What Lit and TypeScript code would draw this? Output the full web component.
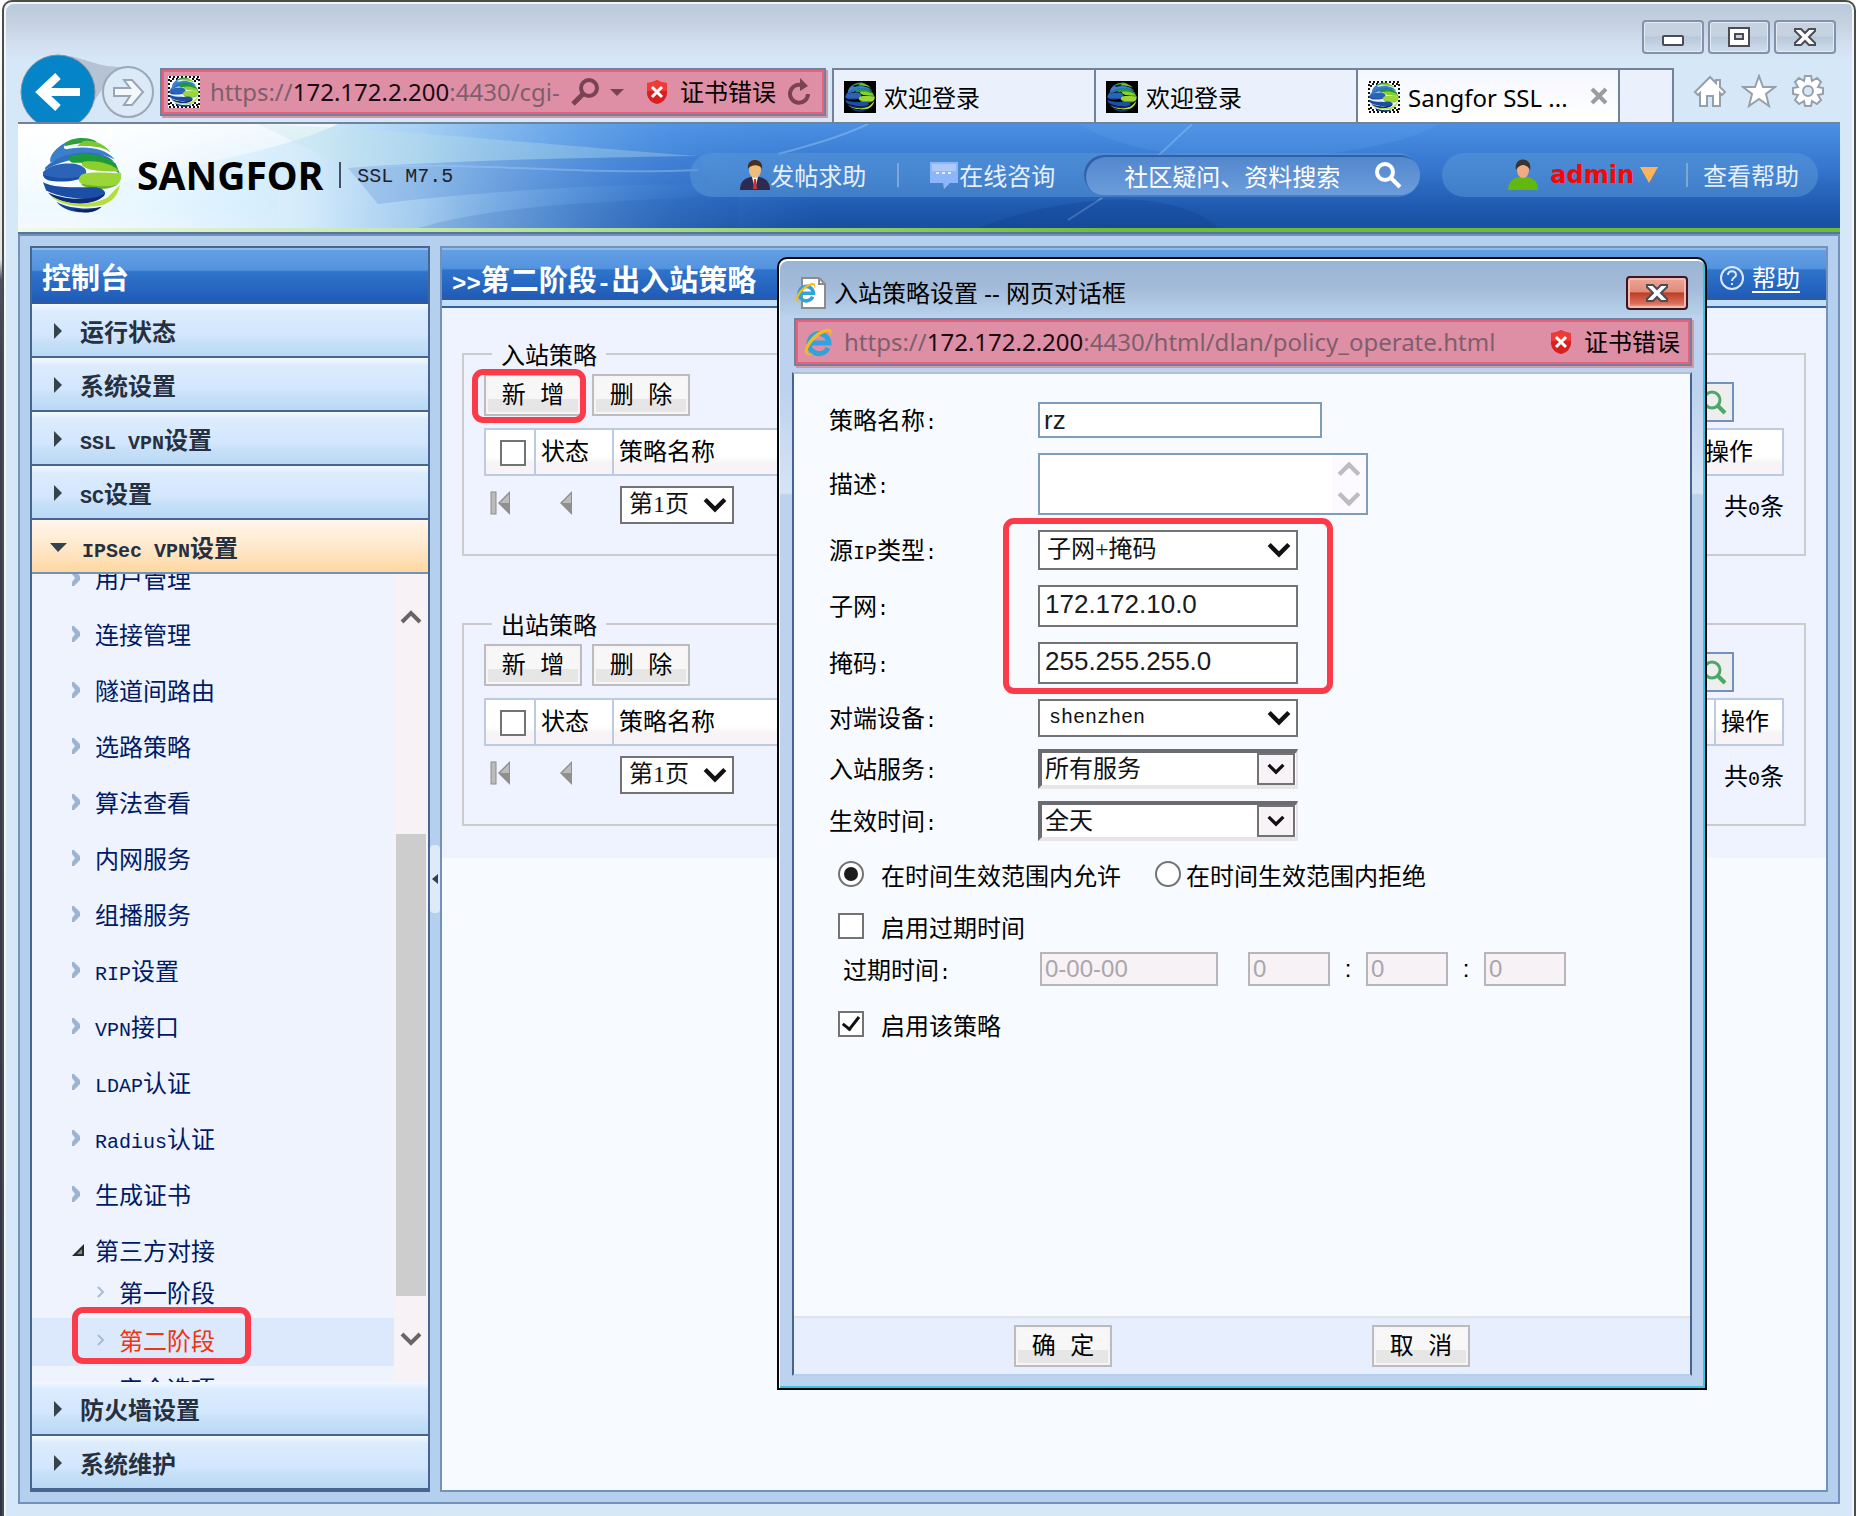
import { LitElement, html, css, svg, nothing } from "lit";
import { customElement } from "lit/decorators.js";
import { classMap } from "lit/directives/class-map.js";

/* Latin runs use a half-em monospace so that they align with the CJK grid. */
const mix = (text: string) =>
  text
    .split(/([\x20-\x7e]+)/)
    .filter((part) => part)
    .map((part) => (/^[\x20-\x7e]+$/.test(part) ? html`<span class="lat">${part}</span>` : part));

const globeBands = svg`
  <path fill="#2f9e3c" d="M22 6C30 0 46 -1 54 5C44 5 32 6 22 9Z"/>
  <path fill="#7cc832" d="M40 4C52 2 62 8 67 15C60 10 50 8 34 9Z"/>
  <path fill="#3b7fcb" d="M8 21C10 14 17 8 24 5C21 9 20 11 24 12C40 8 62 10 71 22C56 13 30 14 8 25Z"/>
  <path fill="#2f6fc0" d="M3 30C12 20 28 15 44 15C56 15 66 19 70 24C54 17 24 20 3 32Z"/>
  <path fill="#1d9a3a" d="M28 18C46 14 64 18 72 26L76 36C66 27 50 25 30 25C26 24 25 20 28 18Z"/>
  <path fill="#8ccf2c" d="M40 24C56 22 70 27 75 33C72 34 60 34 48 32C42 30 36 27 40 24Z"/>
  <path fill="#2a63b8" d="M1 34C8 27 20 25 32 26C42 28 45 33 42 37C36 43 14 42 1 38Z"/>
  <path fill="#1c4fa3" d="M1 37C14 41 32 41 42 37C38 43 22 44 12 43C6 43 2 41 1 37Z"/>
  <path fill="#9ad638" d="M40 36C52 33 68 36 77 35C78 40 76 44 74 46C62 50 48 48 38 45C34 42 36 38 40 36Z"/>
  <path fill="#6db528" d="M38 45C50 48 64 49 74 46C70 50 56 52 48 50C43 49 39 48 38 45Z"/>
  <path fill="#1d4ea6" d="M1 44C12 50 34 49 52 49C60 50 64 54 60 58C52 63 20 60 4 52Z"/>
  <path fill="#0d2c74" d="M6 54C22 62 52 62 61 55C60 60 50 65 36 65C22 64 10 60 6 54Z"/>
  <path fill="#b7dd3c" d="M8 57C22 66 44 68 62 60C66 58 68 54 76 47C74 56 70 62 60 66C44 70 18 68 8 57Z"/>
  <path fill="#173f98" d="M14 63C26 70 46 71 58 68C50 75 26 77 14 63Z"/>
  <path fill="#0a2264" d="M30 70C40 72 50 71 58 68C52 74 40 76 30 70Z"/>`;

const globe = (cls: string) => html`<svg class=${cls} viewBox="0 0 78 74" aria-hidden="true">${globeBands}</svg>`;

const favicon = (dark: boolean) => html`<svg class="fav" viewBox="0 0 32 32" aria-hidden="true">
  ${dark
    ? svg`<rect width="32" height="32" fill="#000"/>`
    : svg`<rect width="32" height="32" fill="#fff"/><rect x="1" y="1" width="30" height="30" fill="none" stroke="#111" stroke-width="2" stroke-dasharray="2 2"/>
      <path d="M2 3h8M22 3h8M2 29h8M22 29h8" stroke="#111" stroke-width="2" stroke-dasharray="2 2" stroke-dashoffset="2"/>
      <path d="M2 5h4M26 5h4M2 27h4M26 27h4" stroke="#111" stroke-width="2" stroke-dasharray="2 2"/><ellipse cx="16" cy="16" rx="14" ry="14" fill="#e6f4fb"/>`}
  <svg x="1" y="1" width="30" height="30" viewBox="0 0 78 74" preserveAspectRatio="none">${globeBands}</svg>
</svg>`;

const shield = html`<svg class="shield" viewBox="0 0 22 26" aria-hidden="true">
  <path d="M11 1C14 3 18 4 21 4V14C21 20 16 24 11 25C6 24 1 20 1 14V4C4 4 8 3 11 1Z" fill="#d91f1f"/>
  <path d="M11 1C14 3 18 4 21 4V12H1V4C4 4 8 3 11 1Z" fill="#ee3b35"/>
  <path d="M6 8L16 18M16 8L6 18" stroke="#fff" stroke-width="3"/></svg>`;

const ieMark = svg`<path d="M26 22A10 10 0 1 1 27 17H9" fill="none" stroke="#2ea3dc" stroke-width="5"/>
  <path d="M4 28C-1 24 10 6 24 3C30 2 31 6 28 10C29 5 26 5 22 7C13 11 4 22 6 27C7 29 10 28 12 27C9 30 6 30 4 28Z" fill="#f3bb1c"/>`;

const ieIcon = html`<svg class="fav" viewBox="0 0 32 32" aria-hidden="true">${ieMark}</svg>`;

const pageIcon = html`<svg class="fav" viewBox="0 0 32 32" aria-hidden="true">
  <path d="M8 1H25L31 7V31H8Z" fill="#fff" stroke="#8c8c8c" stroke-width="2"/><path d="M25 1V7H31" fill="none" stroke="#8c8c8c" stroke-width="2"/>
  <svg x="0" y="4" width="23" height="23" viewBox="0 0 32 32">${ieMark}</svg></svg>`;

const chevron = (cls: string, up = false) => html`<svg class=${cls} viewBox="0 0 22 18" aria-hidden="true">
  <path d=${up ? "M2 14L11 5L20 14" : "M2 4L11 13L20 4"} fill="none" stroke="currentColor" stroke-width="4"/></svg>`;

const crossGlyph = html`<svg class="glyph" viewBox="0 0 24 20" aria-hidden="true">
  <path d="M2 2H8L12 6L16 2H22V4L16 10L22 16V18H16L12 14L8 18H2V16L8 10L2 4Z" fill="#fff" stroke="#4a4c58" stroke-width="2"/></svg>`;

const sections = ["运行状态", "系统设置", "SSL VPN设置", "SC设置"];
const leaves = ["用户管理", "连接管理", "隧道间路由", "选路策略", "算法查看", "内网服务", "组播服务", "RIP设置", "VPN接口", "LDAP认证", "Radius认证", "生成证书"];
const tail = ["防火墙设置", "系统维护"];

@customElement("app-root")
export class AppRoot extends LitElement {
  static styles = css`
    :host { display: block; font: 24px/32px "Noto Sans CJK SC", sans-serif; color: #000; }
    *, *::before, *::after { box-sizing: border-box; }
    button, input, select, textarea { font: inherit; color: inherit; margin: 0; border-radius: 0; }
    button { padding: 0; border: 0; background: none; cursor: pointer; white-space: pre; }
    a { color: inherit; text-decoration: none; }
    svg { display: block; flex: none; }
    .lat { font-family: "Liberation Mono", monospace; font-size: 20px; line-height: 20px; white-space: pre; }
    .fav { width: 32px; height: 32px; }
    .shield { width: 22px; height: 26px; }
    .cap { font-family: "Noto Sans", "Noto Sans CJK SC", sans-serif; white-space: nowrap; }

    .desk { background: linear-gradient(#fff 0, #e4e4e4 260px, #4a5266 280px, #3b4150 360px, #2c3448); padding-left: 2px; }
    .window { position: relative; display: flex; flex-direction: column; height: 100vh; min-height: 1100px; padding: 0 14px 12px;
      border: 2px solid #4a4e48; border-bottom: 0; border-radius: 10px 10px 0 0; box-shadow: inset 2px 2px 0 #f2f6fa, inset -2px 0 0 #f2f6fa;
      background: linear-gradient(#b9cadb 0, #c4d0de 20px, #d3e0f1 44px, #d6e7f7 58px); }

    .caption { display: flex; justify-content: flex-end; gap: 4px; height: 52px; padding: 18px 4px 0 0; }
    .caption button { width: 62px; height: 34px; display: grid; place-items: center; border: 2px solid #8391ae; border-radius: 4px;
      background: linear-gradient(#c6d2e0 45%, #b8c8da 50%, #d0deed); box-shadow: inset 0 0 0 1px #e2eaf3; }
    .glyph { width: 24px; height: 20px; }

    .nav { display: flex; align-items: flex-start; height: 68px; padding-left: 2px; }
    .back { width: 76px; height: 68px; }
    .back svg, .fwd svg { overflow: visible; }
    .back svg { clip-path: inset(-4px -60px 0 -4px); }
    .fwd { width: 54px; height: 54px; margin: 11px 5px 0 5px; position: relative; }
    .addr { display: flex; align-items: center; height: 48px; border: 2px solid #71839c; background: #df8fa5;
      box-shadow: inset 0 0 0 2px #e5627a, 2px 2px 0 #d596a8; padding: 0 12px 0 6px; color: #000; }
    .nav .addr { flex: 644 1 0; margin-top: 14px; min-width: 0; }
    .url { color: #7d5f6c; margin-left: 10px; }
    .url b { font-weight: 400; color: #1a0a10; }
    .nav .url { flex: 1; overflow: hidden; }
    .addr .shield { margin: 0 12px 0 20px; }
    .addr .reload { margin-left: 12px; }
    .tabs { flex: 838 1 0; display: flex; height: 54px; margin: 14px 0 0 6px; border: 2px solid #71839c; border-bottom: 0; background: #eaf1fd; min-width: 0; }
    .tab { flex: 1; display: flex; align-items: center; gap: 8px; padding: 0 10px; border-right: 2px solid #71839c; min-width: 0; text-align: left; }
    .tab.on { background: linear-gradient(#f5f7ff, #fff); }
    .tab .x { margin-left: auto; }
    .tab .fav { margin-top: 2px; }
    .tab .cap { margin-top: 4px; }
    .stub { width: 52px; }
    .tools { width: 166px; display: flex; justify-content: flex-end; gap: 14px; padding: 20px 15px 0 0; }

    .banner { position: relative; display: flex; align-items: center; height: 112px; flex: none; border-top: 2px solid #71839c; border-bottom: 2px solid #55759f;
      background: linear-gradient(90deg, #eefbe6, #aadb8c 34%, #6dbd35 60%) bottom / 100% 4px no-repeat, #2c68bd; padding: 0 22px 6px 24px; }
    .sky { position: absolute; z-index: 0; left: 0; top: 0; width: 100%; height: 104px; }
    .banner > :not(.sky) { position: relative; }
    .logo { width: 80px; height: 76px; }
    .brand { font: 700 39px/44px "Noto Sans", sans-serif; margin-left: 15px; }
    .rule { width: 2px; height: 26px; background: #46505e; margin: 0 16px; }
    .model { margin-right: auto; color: #1c1f2a; font-family: "Liberation Mono", monospace; font-size: 20px; padding-top: 4px; }
    .pill { display: flex; align-items: center; height: 44px; border-radius: 22px; background: #5b9ad880; color: #e6effa; white-space: nowrap; }
    .help-pill { padding-left: 50px; }
    .pill a { display: flex; align-items: center; }
    .pill .bar { width: 2px; height: 24px; background: #7fa7d6; }
    .bar.mid { margin: 0 31px; }
    .bar.end { margin-right: 15px; }
    .user-pill { margin-left: 22px; padding: 0 19px 0 66px; }
    .drop { margin: 0 28px 0 6px; }
    .find { display: flex; align-items: center; width: 336px; height: 40px; border-radius: 20px; margin-left: 29px; padding: 0 18px 0 40px;
      background: linear-gradient(#5286cc, #6b9ddb); box-shadow: inset 2px 2px 0 #2f61a8; }
    .find input { flex: 1; min-width: 0; border: 0; padding: 0; background: none; outline: 0; height: 36px; }
    .find input::placeholder { color: #fff; opacity: 1; }
    .user { color: #f80505; font: 700 24px/32px "DejaVu Sans", sans-serif; margin-left: 12px; }

    .body { flex: 1; min-height: 0; display: grid; grid-template-columns: 400px minmax(0, 1fr); gap: 10px; padding: 10px; border: 2px solid #7391bb; background: #b4d0ee; }
    .side { position: relative; display: flex; flex-direction: column; min-height: 0; border: 2px solid #48658f; border-bottom-width: 4px; background: #eef3fe; }
    .head { height: 56px; flex: none; display: flex; align-items: center; font-weight: 700; font-size: 29px; color: #fff; padding: 0 10px;
      border-top: 2px solid #8fbbee; border-bottom: 2px solid #2f5a9c; background: linear-gradient(#639fe4, #5493df 38%, #2f74cb 42%, #1f5bb8); }
    .head .lat { font-size: 24px; }
    .sec { display: flex; align-items: center; gap: 18px; width: 100%; height: 54px; flex: none; padding: 2px 22px 0; font-weight: 700; color: #26303f;
      border-bottom: 2px solid #48658f; background: linear-gradient(#f4f9ff, #dcecfe 14%, #d2e6fd 60%, #c8e0f8 72%, #b9d9f5); }
    .sec.open { gap: 15px; padding: 2px 18px 0; background: linear-gradient(#fff6ea, #ffe9cd 50%, #ffd7a0); border-bottom-color: #7391bb; }
    .tail:last-child { border-bottom: 0; height: 52px; }
    .tree { flex: 1 1 0; min-height: 0; display: flex; }
    .list { flex: 1; overflow: hidden; color: #001a66; }
    .list ul { list-style: none; margin: -24px 0 0; padding: 0; }
    .list a { display: flex; align-items: center; height: 56px; padding-left: 40px; gap: 14px; }
    .list .fold { gap: 10px; }
    .list .sub { height: 48px; padding: 0 0 4px 64px; }
    .list .first { height: 40px; padding-bottom: 12px; }
    .list .cur { position: relative; color: #f0350f; background: #dce9fd; }
    .cur::after { content: ""; position: absolute; left: 40px; top: -11px; width: 179px; height: 57px; border: 6px solid #fb3b4a; border-radius: 11px; }
    .rail { width: 34px; background: #f7f2f6; color: #666; display: flex; flex-direction: column; align-items: center; padding: 34px 0; }
    .rail svg { width: 24px; height: 18px; }
    .gap { flex: 208; }
    .thumb { flex: 462; width: 30px; background: #cdcdcd; }
    .gap2 { flex: 34; }
    .grip { position: absolute; right: -12px; top: 597px; width: 10px; height: 68px; display: grid; place-items: center; background: #dceafa; border-radius: 4px; }

    .main { border: 2px solid #7391bb; background: #f7fbff; min-width: 0; overflow: hidden; }
    .main .head { height: 52px; padding-top: 8px; }
    .help { margin-left: auto; display: flex; align-items: center; gap: 7px; font-weight: 400; font-size: 24px; margin-right: 16px; }
    .help span { border-bottom: 2px solid #fff; line-height: 28px; }
    .strip { height: 8px; background: #c2ddf8; border-bottom: 2px solid #36609b; }
    .panels { background: #eef3ff; padding: 30px 20px 32px; display: grid; gap: 52px; }
    fieldset { margin: 0; min-width: 0; border: 2px solid #ccc; padding: 4px 20px 30px; }
    legend { margin-left: 8px; padding: 0 9px; }
    .bar-row { display: flex; gap: 10px; height: 48px; }
    .btn { width: 98px; height: 42px; padding-top: 3px; border: 2px solid #bcbcbc; font-family: "Liberation Mono", "Noto Sans CJK SC", sans-serif;
      background: linear-gradient(#f7f7f7 60%, #e6e6e6 60%); box-shadow: inset 0 0 0 2px #f7f3f6; position: relative; }
    .btn.mark::after { content: ""; position: absolute; inset: -7px -6px -9px -14px; border: 6px solid #fb3b4a; border-radius: 11px; }
    .look { width: 40px; height: 40px; display: grid; place-items: center; border: 2px solid #7391bb; background: #eee; margin: 0 50px 0 auto; align-self: flex-end; }
    table { width: 100%; height: 48px; table-layout: fixed; border-collapse: collapse; margin-top: 6px; }
    th { font-weight: 400; text-align: left; padding: 0 0 4px 5px; border: 2px solid #bccbe0; background: linear-gradient(#fff 60%, #f7f3f6 75%); white-space: nowrap; }
    .c1 { width: 50px; } .c2 { width: 78px; } .c4 { width: 68px; } .c4.wide { width: 84px; }
    th.tick { padding: 2px 0 0 14px; }
    .box, .dot { appearance: none; display: block; position: relative; flex: none; width: 26px; height: 26px; border: 2px solid #737373; background: #fff; }
    .dot { border-radius: 13px; }
    .dot:checked::before { content: ""; position: absolute; inset: 4px; border-radius: 8px; background: #1c1c1c; }
    .box:checked::before { content: ""; position: absolute; left: 6px; top: 0; width: 10px; height: 17px; border: solid #111; border-width: 0 3px 3px 0; transform: rotate(38deg); }
    .pager { display: flex; align-items: center; height: 38px; margin-top: 10px; padding-left: 6px; }
    .pager button { margin: 0 50px 4px 0; }
    .pager output { margin-left: auto; }

    .sel { display: grid; position: relative; color: #111; }
    .sel select { appearance: none; grid-area: 1 / 1; width: 100%; height: 40px; border: 2px solid #737373; background: #fff; padding: 0 0 3px 7px; outline: 0;
      font-family: "Liberation Serif", "Noto Sans CJK SC", serif; }
    .sel .arr { grid-area: 1 / 1; justify-self: end; align-self: center; width: 24px; height: 20px; margin-right: 7px; pointer-events: none; }
    .pager .sel { width: 114px; margin-left: -2px; }
    .pager select { height: 38px; }
    .sel.mono select { font-family: "Liberation Mono", monospace; font-size: 20px; height: 38px; padding: 0 0 0 9px; }
    .sel.deep select { border-width: 4px 2px 4px 4px; border-color: #6b6b70 #e8e4e8 #e8e4e8 #6b6b70; padding-left: 3px; }
    .sel.deep .arr { width: 38px; height: 32px; padding: 6px 8px; margin-right: 3px; border: 2px solid #737373; background: #f7f3f6; }

    .dialog { position: absolute; left: 773px; right: 147px; top: 255px; bottom: 126px; display: flex; flex-direction: column; padding: 0 13px 12px 13px;
      border: 2px solid #05070a; border-radius: 10px 10px 0 0; box-shadow: inset 1px 2px 0 #fff, inset -2px -2px 0 #3cc3e0;
      background: linear-gradient(#99b4d3 0, #a3bbd9 28px, #b6cfe9 54px, #bdd2ef 58px, #bdd2ef 130px, #d6e4f5 234px, #bdd2ef 236px); }
    .dtitle { display: flex; align-items: center; gap: 8px; height: 59px; padding: 8px 4px 0 2px; flex: none; }
    .dtitle .cap { flex: 1; }
    .kill { width: 62px; height: 34px; display: grid; place-items: center; align-self: center; border: 2px solid #3f1420; border-radius: 4px;
      background: linear-gradient(#eda697, #e08b7a 46%, #be3d25 50%, #d8705c 85%, #f0a898); box-shadow: inset 0 0 0 2px #f3b9ad; }
    .dialog .addr { margin: 0 0 6px 2px; flex: none; padding-right: 10px; }
    .dialog .url { flex: 1; }
    .inner { flex: 1; min-height: 0; display: flex; flex-direction: column; border: 2px solid #46648f; border-top-color: #afc0da; border-bottom-color: #b4d0f0; background: #f7fbff; }
    .form { flex: 1; min-height: 0; padding: 28px 35px 0; overflow: hidden; }
    .rows { display: grid; gap: 15px; position: relative; }
    .rows.tight { gap: 12px; margin-top: 12px; }
    .marked::after { content: ""; position: absolute; left: 174px; width: 330px; top: -12px; bottom: -10px; border: 6px solid #fb3b4a; border-radius: 11px; pointer-events: none; }
    .row { display: grid; grid-template-columns: 209px auto; justify-content: start; align-items: center; }
    .row > label { padding-bottom: 3px; }
    .row .sel { width: 260px; }
    .txt { height: 42px; border: 2px solid #737373; background: #fff; padding: 0 5px 4px; outline: 0; width: 260px; font: 26px/32px "Liberation Sans", sans-serif; color: #1b1b1b; }
    .txt.name { width: 284px; height: 36px; border-color: #7f9db9; padding: 0 4px; }
    .area { display: flex; width: 330px; height: 62px; border: 2px solid #7f9db9; background: #fff; }
    .area textarea { flex: 1; min-width: 0; border: 0; resize: none; outline: 0; background: none; padding: 2px 4px; }
    .spin { width: 34px; background: #fdfaff; color: #bdbdc0; display: flex; flex-direction: column; justify-content: space-between; align-items: center; padding: 4px 0; }
    .spin svg { width: 24px; height: 20px; }
    .opt { display: flex; align-items: center; height: 32px; margin: 20px 0 0 9px; white-space: nowrap; }
    .opt label { margin: 2px 34px 0 17px; }
    .opt .near { margin-left: 5px; }
    .opt.radios { margin-top: 17px; }
    .expiry { display: flex; align-items: center; margin: 10px 0 22px 14px; }
    .expiry label { width: 197px; white-space: nowrap; }
    .expiry .txt { width: 82px; height: 34px; padding: 0 3px; border-color: #b7b5ba; background: #f7f2f6; color: #aaa6ad; font-size: 24px; }
    .expiry .date { width: 178px; margin-right: 30px; }
    .expiry i { width: 36px; text-align: center; font: 24px/32px "Liberation Sans", sans-serif; }
    .foot { height: 58px; flex: none; display: flex; justify-content: center; align-items: center; gap: 260px; border-top: 2px solid #e2e2ea; background: #e7eefd; }
  `;

  private section(text: string, cls = "") {
    return html`<button class="sec ${cls}">
      <svg width="8" height="16" viewBox="0 0 8 16" aria-hidden="true"><path d="M0 0L8 8L0 16Z" fill="#35434d"/></svg><span>${mix(text)}</span>
    </button>`;
  }

  private policyTable(title: string, id: string, marked: boolean) {
    return html`<fieldset>
      <legend>${title}</legend>
      <div class="bar-row">
        <button class=${classMap({ btn: true, mark: marked })}>新 增</button>
        <button class="btn">删 除</button>
        <button class="look" aria-label="搜索"><svg width="26" height="26" viewBox="0 0 26 26"><circle cx="11" cy="11" r="8" fill="none" stroke="#4ba867" stroke-width="3"/><path d="M17 17L24 24" stroke="#4ba867" stroke-width="4"/></svg></button>
      </div>
      <table>
        <thead><tr>
          <th class="c1 tick"><input class="box" type="checkbox" aria-label="全选"></th>
          <th class="c2">状态</th><th>策略名称</th><th class=${classMap({ c4: true, wide: marked })}>操作</th>
        </tr></thead>
      </table>
      <div class="pager">
        <button aria-label="首页"><svg width="20" height="24" viewBox="0 0 20 24"><rect x="1" y="1" width="5" height="22" fill="#bbb" stroke="#8d8d8d"/><path d="M20 0V24L8 12Z" fill="#8f8f8f"/><path d="M19 3V12H10Z" fill="#bcbcbc"/></svg></button>
        <button aria-label="上一页"><svg width="12" height="24" viewBox="0 0 12 24"><path d="M12 0V24L0 12Z" fill="#8f8f8f"/><path d="M11 3V12H2Z" fill="#bcbcbc"/></svg></button>
        <div class="sel"><select id=${id} aria-label="页码"><option>第1页</option></select>${chevron("arr")}</div>
        <output>${mix("共0条")}</output>
      </div>
    </fieldset>`;
  }

  private select(id: string, label: string, value: string, cls = "") {
    return html`<div class="row"><label for=${id}>${mix(label)}</label>
      <div class="sel ${cls}"><select id=${id}><option>${value}</option></select>${chevron("arr")}</div></div>`;
  }

  private tab(text: string, active: boolean, dark: boolean) {
    return html`<button class=${classMap({ tab: true, on: active })}>${favicon(dark)}<span class="cap">${text}</span>
      ${active ? html`<svg class="x" width="18" height="18" viewBox="0 0 18 18" aria-hidden="true"><path d="M2 2L16 16M16 2L2 16" stroke="#9c9c9c" stroke-width="4"/></svg>` : nothing}</button>`;
  }

  private browser() {
    return html`
      <div class="caption">
        <button aria-label="最小化"><svg class="glyph" viewBox="0 0 24 20"><rect x="2" y="9" width="20" height="9" rx="1" fill="#fff" stroke="#4a4c58" stroke-width="2"/></svg></button>
        <button aria-label="最大化"><svg class="glyph" viewBox="0 0 24 20"><rect x="2" y="1" width="20" height="18" fill="#fff" stroke="#4a4c58" stroke-width="2"/><rect x="8" y="7" width="8" height="5" fill="#c6d2e0" stroke="#4a4c58" stroke-width="2"/></svg></button>
        <button aria-label="关闭">${crossGlyph}</button>
      </div>
      <div class="nav">
        <button class="back" aria-label="后退"><svg width="76" height="68" viewBox="0 0 76 68">
          <path d="M50 2C74 8 84 14 108 13L86 30L72 50Z" fill="#b6c3d4"/>
          <circle cx="38" cy="38" r="37" fill="#0684c8" stroke="#7d93a8" stroke-width="1"/>
          <path d="M60 38H24M38 22L21 38L38 54" fill="none" stroke="#fff" stroke-width="8"/></svg></button>
        <button class="fwd" aria-label="前进"><svg width="54" height="54" viewBox="0 0 54 54">
          <circle cx="27" cy="27" r="25" fill="#dce9f7" stroke="#9ba8b6" stroke-width="2"/>
          <path d="M13 23H29L23 15H31L42 27L31 40H23L29 31H13Z" fill="#f3f8fd" stroke="#98a5b4" stroke-width="2"/></svg></button>
        <div class="addr">${favicon(false)}
          <span class="cap url">https://<b>172.172.2.200</b>:4430/cgi-</span>
          <svg width="56" height="28" viewBox="0 0 56 28" aria-hidden="true"><circle cx="19" cy="10" r="8" fill="none" stroke="#7a4355" stroke-width="4"/><path d="M13 16L3 26" stroke="#7a4355" stroke-width="5"/><path d="M40 11H54L47 18Z" fill="#7a4355"/></svg>
          ${shield}<span class="cap">证书错误</span>
          <svg class="reload" width="24" height="28" viewBox="0 0 24 28" aria-hidden="true"><path d="M20 16A9 9 0 1 1 13 7" fill="none" stroke="#7a4355" stroke-width="4"/><path d="M12 0L20 8L12 13Z" fill="#7a4355"/></svg>
        </div>
        <div class="tabs">${this.tab("欢迎登录", false, true)}${this.tab("欢迎登录", false, true)}${this.tab("Sangfor SSL ...", true, false)}<span class="stub"></span></div>
        <div class="tools">
          <button aria-label="主页"><svg width="34" height="34" viewBox="0 0 34 34"><path d="M17 3L2 18L5 21L7 19V32H14V22H20V32H27V19L29 21L32 18L27 13V6H23V9Z" fill="#fff" stroke="#96a0ac" stroke-width="2"/></svg></button>
          <button aria-label="收藏"><svg width="36" height="34" viewBox="0 0 36 34"><path d="M18 2L22 13H34L25 20L28 32L18 25L8 32L11 20L2 13H14Z" fill="#fff" stroke="#96a0ac" stroke-width="2"/></svg></button>
          <button aria-label="设置"><svg width="34" height="34" viewBox="0 0 34 34">
            <path d="M14 2H20L21 7L26 4L30 8L27 13L32 14V20L27 21L30 26L26 30L21 27L20 32H14L13 27L8 30L4 26L7 21L2 20V14L7 13L4 8L8 4L13 7Z" fill="#fff" stroke="#96a0ac" stroke-width="2"/>
            <circle cx="17" cy="17" r="5" fill="#d6e7f7" stroke="#96a0ac" stroke-width="2"/></svg></button>
        </div>
      </div>`;
  }

  private banner() {
    return html`<header class="banner">
      <svg class="sky" viewBox="0 0 1822 104" preserveAspectRatio="none" aria-hidden="true">
        <defs>
          <linearGradient id="v" x2="0" y2="1"><stop stop-color="#4a90e4"/><stop offset=".45" stop-color="#3474cc"/><stop offset=".8" stop-color="#1f5ab0"/><stop offset="1" stop-color="#19509f"/></linearGradient>
          <linearGradient id="h"><stop offset=".03" stop-color="#fff"/><stop offset=".08" stop-color="#f1f9ff"/><stop offset=".16" stop-color="#d2eafb"/><stop offset=".22" stop-color="#b2d8f6" stop-opacity=".9"/><stop offset=".29" stop-color="#84bbf0" stop-opacity=".65"/><stop offset=".36" stop-color="#5f9fe8" stop-opacity=".3"/><stop offset=".44" stop-color="#4a90e4" stop-opacity="0"/></linearGradient>
          <linearGradient id="w" x2="0" y2="1"><stop stop-color="#fff" stop-opacity=".7"/><stop offset="1" stop-color="#fff" stop-opacity="0"/></linearGradient>
          <linearGradient id="c" x2="0" y2="1"><stop stop-color="#c6ecff" stop-opacity="0"/><stop offset=".8" stop-color="#c6ecff" stop-opacity=".6"/><stop offset="1" stop-color="#d8ecfc" stop-opacity=".6"/></linearGradient>
        </defs>
        <rect width="1822" height="104" fill="url(#v)"/>
        <rect width="1822" height="104" fill="url(#h)"/>
        <rect width="260" height="104" fill="url(#c)" opacity=".5"/>
        <path d="M0 0H320C260 30 120 50 0 80Z" fill="url(#w)"/>
        <path d="M240 0C380 5 520 20 680 32C560 34 440 36 330 44Z" fill="#bfe6e6" opacity=".3"/>
        <path d="M330 44C440 36 560 34 680 32L690 60C560 60 440 70 360 80Z" fill="#2a66c4" opacity=".18"/>
        <path d="M400 104C500 76 600 80 720 70V104Z" fill="#1d58ae" opacity=".16"/>
        <path d="M350 44C440 36 560 52 680 46M760 30C790 22 820 14 850 0M1050 96L1084 74M1140 32L1174 0" fill="none" stroke="#a8cdf4" stroke-width="2" opacity=".4"/>
        <path d="M1060 0H1420C1380 30 1160 60 1060 0Z" fill="#6aa8f0" opacity=".2"/>
        <path d="M960 104C1060 66 1160 66 1200 104Z" fill="#123f8c" opacity=".3"/>
      </svg>
      ${globe("logo")}
      <span class="brand">SANGFOR</span><span class="rule"></span><span class="model">SSL M7.5</span>
      <nav class="pill help-pill">
        <a href="#post"><svg width="30" height="32" viewBox="0 0 30 32" aria-hidden="true"><path d="M0 31C0 22 5 19 11 18H19C25 19 30 22 30 31Z" fill="#2c2c52"/><path d="M12 18L15 30L18 18Z" fill="#fff"/><path d="M14 20H16L17 30H13Z" fill="#c33"/><ellipse cx="15" cy="11" rx="6" ry="8" fill="#eebb7e"/><path d="M8 10C6 -2 24 -2 22 10C20 5 11 5 8 10Z" fill="#4b2f1c"/></svg>发帖求助</a>
        <span class="bar mid"></span>
        <a href="#chat"><svg width="29" height="28" viewBox="0 0 29 28" aria-hidden="true"><path d="M0 1H28V22H20L14 28L13 22H0Z" fill="#8db6fa"/><path d="M2 3H26V10H2Z" fill="#acc9fc"/><path d="M6 12H23" stroke="#e3eeff" stroke-width="2" stroke-dasharray="3 3"/></svg>在线咨询</a>
        <label class="find"><input type="text" placeholder="社区疑问、资料搜索" aria-label="搜索">
          <svg width="28" height="28" viewBox="0 0 28 28" aria-hidden="true"><circle cx="11" cy="11" r="8" fill="none" stroke="#fff" stroke-width="4"/><path d="M17 17L26 26" stroke="#fff" stroke-width="4"/></svg></label>
      </nav>
      <nav class="pill user-pill">
        <svg width="30" height="32" viewBox="0 0 30 32" aria-hidden="true"><path d="M0 31C0 22 6 19 11 18H19C25 19 30 22 30 31Z" fill="#62b80e"/><ellipse cx="15" cy="11" rx="6" ry="8" fill="#f0ab84"/><path d="M8 11C5 -3 25 -3 22 11C20 5 12 4 8 11Z" fill="#3a3430"/></svg>
        <a class="user" href="#user">admin</a>
        <svg class="drop" width="18" height="16" viewBox="0 0 18 16" aria-hidden="true"><path d="M0 0H18L9 16Z" fill="#fcb45c"/></svg>
        <span class="bar end"></span><a href="#manual">查看帮助</a>
      </nav>
    </header>`;
  }

  private sidebar() {
    const arrow = html`<svg width="9" height="16" viewBox="0 0 9 16" aria-hidden="true"><path d="M0 0H2L8 6V10L2 16H0V12L3 8L0 4Z" fill="#9db3d0"/></svg>`;
    const small = html`<svg width="9" height="12" viewBox="0 0 9 12" aria-hidden="true"><path d="M2 1L7 6L2 11" fill="none" stroke="#a9bcd6" stroke-width="2"/></svg>`;
    return html`<aside class="side">
      <div class="head">控制台</div>
      ${sections.map((s) => this.section(s))}
      <button class="sec open"><svg width="17" height="9" viewBox="0 0 17 9" aria-hidden="true"><path d="M0 0H17L8 9Z" fill="#35434d"/></svg><span>${mix("IPSec VPN设置")}</span></button>
      <div class="tree">
        <div class="list"><ul>
          ${leaves.map((l) => html`<li><a href="#leaf">${arrow}<span>${mix(l)}</span></a></li>`)}
          <li><a class="fold" href="#third"><svg width="13" height="12" viewBox="0 0 13 12" aria-hidden="true"><path d="M12 0V12H0Z" fill="#2a2a2a"/><path d="M10 5V10H5Z" fill="#8a8a8a"/></svg>第三方对接</a></li>
          <li><a class="sub first" href="#p1">${small}第一阶段</a></li>
          <li><a class="sub cur" href="#p2">${small}第二阶段</a></li>
          <li><a class="sub" href="#safe">${small}安全选项</a></li>
        </ul></div>
        <div class="rail">${chevron("", true)}<span class="gap"></span><span class="thumb"></span><span class="gap2"></span>${chevron("")}</div>
      </div>
      <span class="grip"><svg width="6" height="10" viewBox="0 0 6 10" aria-hidden="true"><path d="M6 0V10L0 5Z" fill="#333f55"/></svg></span>
      ${tail.map((s) => this.section(s, "tail"))}
    </aside>`;
  }

  private dialog() {
    return html`<section class="dialog" role="dialog" aria-labelledby="dlg">
      <div class="dtitle">${pageIcon}<span class="cap" id="dlg">入站策略设置 -- 网页对话框</span><button class="kill" aria-label="关闭">${crossGlyph}</button></div>
      <div class="addr">${ieIcon}<span class="cap url">https://<b>172.172.2.200</b>:4430/html/dlan/policy_operate.html</span>${shield}<span class="cap">证书错误</span></div>
      <form class="inner" @submit=${(e: Event) => e.preventDefault()}>
        <div class="form">
          <div class="rows">
            <div class="row"><label for="name">${mix("策略名称:")}</label><input class="txt name" id="name" type="text" .value=${"rz"}></div>
            <div class="row"><label for="desc">${mix("描述:")}</label>
              <div class="area"><textarea id="desc"></textarea><span class="spin">${chevron("", true)}${chevron("")}</span></div></div>
            <div class="rows marked">
              ${this.select("iptype", "源IP类型:", "子网+掩码")}
              <div class="row"><label for="net">${mix("子网:")}</label><input class="txt" id="net" type="text" .value=${"172.172.10.0"}></div>
              <div class="row"><label for="mask">${mix("掩码:")}</label><input class="txt" id="mask" type="text" .value=${"255.255.255.0"}></div>
            </div>
            ${this.select("peer", "对端设备:", "shenzhen", "mono")}
          </div>
          <div class="rows tight">
            ${this.select("svc", "入站服务:", "所有服务", "deep")}
            ${this.select("time", "生效时间:", "全天", "deep")}
          </div>
          <div class="opt radios">
            <input class="dot" type="radio" name="act" id="allow" checked><label for="allow">在时间生效范围内允许</label>
            <input class="dot" type="radio" name="act" id="deny"><label class="near" for="deny">在时间生效范围内拒绝</label>
          </div>
          <div class="opt"><input class="box" type="checkbox" id="exp"><label for="exp">启用过期时间</label></div>
          <div class="expiry"><label for="date">${mix("过期时间:")}</label>
            <input class="txt date" id="date" type="text" disabled .value=${"0-00-00"}>
            <input class="txt" type="text" aria-label="时" disabled .value=${"0"}><i>:</i>
            <input class="txt" type="text" aria-label="分" disabled .value=${"0"}><i>:</i>
            <input class="txt" type="text" aria-label="秒" disabled .value=${"0"}></div>
          <div class="opt"><input class="box" type="checkbox" id="on" checked><label for="on">启用该策略</label></div>
        </div>
        <div class="foot"><button class="btn">确 定</button><button class="btn" type="button">取 消</button></div>
      </form>
    </section>`;
  }

  render() {
    return html`<div class="desk"><div class="window">
      ${this.browser()}
      ${this.banner()}
      <div class="body">
        ${this.sidebar()}
        <main class="main">
          <div class="head"><span>${mix(">>第二阶段-出入站策略")}</span>
            <a class="help" href="#help"><svg width="26" height="26" viewBox="0 0 26 26" aria-hidden="true"><circle cx="13" cy="13" r="11" fill="none" stroke="#dce9fb" stroke-width="2"/><path d="M9 10C9 5 17 5 17 10C17 13 13 12 13 16M13 18V20" fill="none" stroke="#dce9fb" stroke-width="2"/></svg><span>帮助</span></a></div>
          <div class="strip"></div>
          <div class="panels">${this.policyTable("入站策略", "page-in", true)}${this.policyTable("出站策略", "page-out", false)}</div>
        </main>
      </div>
      ${this.dialog()}
    </div></div>`;
  }
}
